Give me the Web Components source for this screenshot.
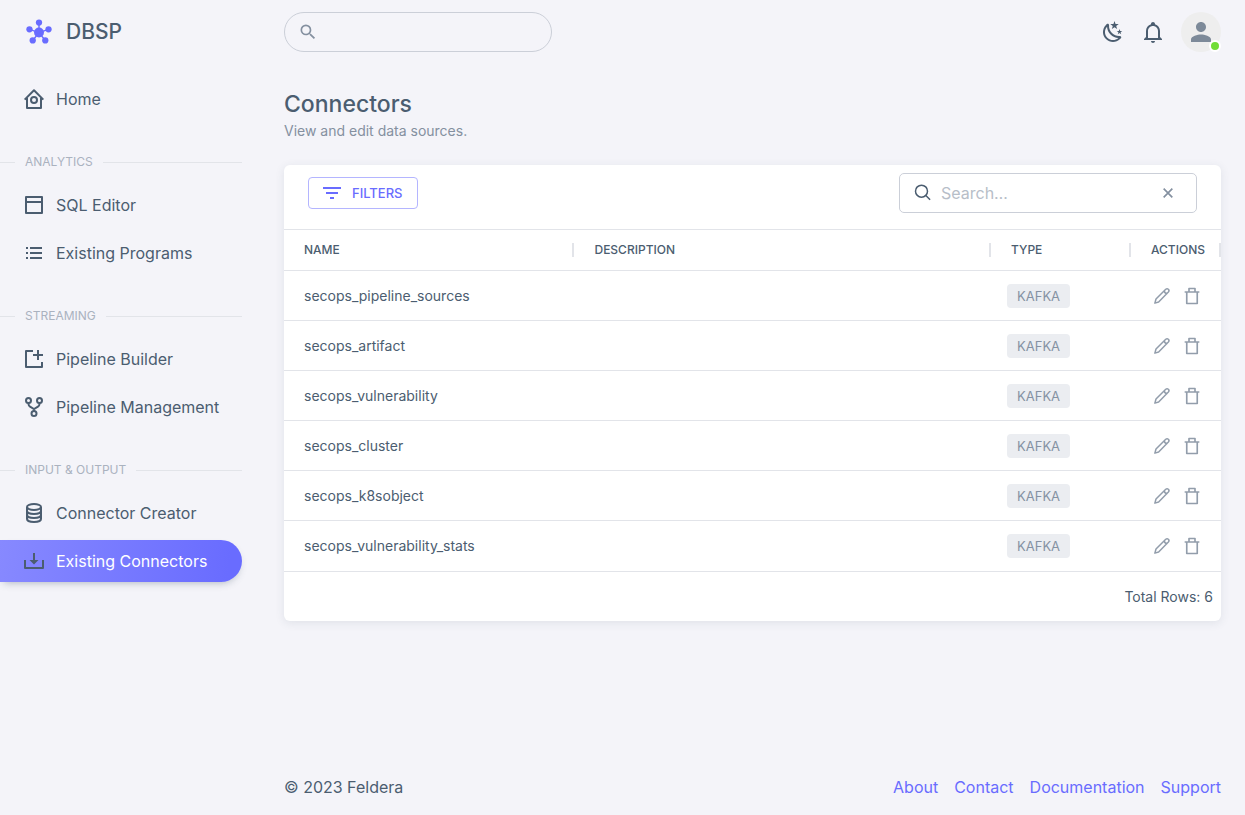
<!DOCTYPE html>
<html lang="en">
<head>
<meta charset="utf-8">
<meta name="viewport" content="width=device-width, initial-scale=1">
<title>DBSP - Connectors</title>
<style>
  html, body { margin: 0; }
  body {
    --primary: #696cff;
    --text: #4b5d70;
    --muted: #8490a0;
    --disabled: #aab2bf;
    --line: #e2e4e9;
    --line-strong: #cbcfd8;
    --page: #f4f4f9;
    background: var(--page);
    color: var(--text);
    font: 400 16px/24px Inter, "Liberation Sans", sans-serif;
  }
</style>
</head>
<body>
<app-shell>
  <side-nav slot="nav">
    <nav-item icon="home" href="#home">Home</nav-item>
    <nav-section>Analytics</nav-section>
    <nav-item icon="window" href="#sql">SQL Editor</nav-item>
    <nav-item icon="list" href="#programs">Existing Programs</nav-item>
    <nav-section>Streaming</nav-section>
    <nav-item icon="add" href="#builder">Pipeline Builder</nav-item>
    <nav-item icon="fork" href="#pipelines">Pipeline Management</nav-item>
    <nav-section>Input &amp; Output</nav-section>
    <nav-item icon="data" href="#creator">Connector Creator</nav-item>
    <nav-item icon="inbox" href="#connectors" active>Existing Connectors</nav-item>
  </side-nav>
  <top-bar slot="top"></top-bar>
  <page-heading heading="Connectors">View and edit data sources.</page-heading>
  <connector-grid></connector-grid>
  <page-footer slot="footer">© 2023 Feldera</page-footer>
</app-shell>
<script>
const ICONS = {
  logo: '<g fill="currentColor"><circle cx="12" cy="12.500" r="4.600"/><circle cx="12" cy="3.300" r="2.900"/><circle cx="3.200" cy="9.500" r="2.900"/><circle cx="20.800" cy="9.500" r="2.900"/><circle cx="6.200" cy="19.800" r="2.900"/><circle cx="17.800" cy="19.800" r="2.900"/></g><path stroke="currentColor" stroke-width="1.300" fill="none" d="M12 3v9M3.2 9.500 12 12.500l8.800-3M6.200 19.800 12 12.500l5.800 7.300"/>',
  home: '<g fill="none" stroke="currentColor" stroke-width="2" stroke-linejoin="round"><path d="M2.700 12.600 12 3.200l9.300 9.400M5 11v10h14V11"/><circle cx="12" cy="13" r="3"/></g>',
  window: '<path fill="none" stroke="currentColor" stroke-width="2" stroke-linejoin="round" d="M4 4h16v16H4zM4 9h16"/>',
  list: '<path fill="currentColor" d="M4 6h2v2H4zm0 5h2v2H4zm0 5h2v2H4zM8 6h12v2H8zm0 5h12v2H8zm0 5h12v2H8z"/>',
  add: '<path fill="none" stroke="currentColor" stroke-width="2" stroke-linejoin="round" d="M11 4H4v16h16v-5M16 3v10M11 8h10"/>',
  fork: '<g fill="none" stroke="currentColor" stroke-width="2"><circle cx="6.500" cy="5.500" r="2.500"/><circle cx="17.500" cy="5.500" r="2.500"/><circle cx="12" cy="18.500" r="2.500"/><path d="M6.500 8v1q0 2 2 3l3.500 2 3.500-2q2-1 2-3V8M12 13.500V16"/></g>',
  data: '<g fill="none" stroke="currentColor" stroke-width="2"><ellipse cx="12" cy="6" rx="7" ry="3"/><path d="M5 6v12c0 1.700 3.100 3 7 3s7-1.300 7-3V6M5 10c0 1.700 3.100 3 7 3s7-1.300 7-3M5 14c0 1.700 3.100 3 7 3s7-1.300 7-3"/></g>',
  inbox: '<path fill="none" stroke="currentColor" stroke-width="2" stroke-linejoin="round" d="M3 11v8h18v-8M12 4v8"/><path fill="currentColor" d="M7.500 11h9L12 15.500z"/>',
  magnify: '<path fill="currentColor" d="M9.500 3A6.500 6.500 0 0 1 16 9.500C16 11.110 15.410 12.590 14.440 13.730L14.710 14H15.500L20.500 19L19 20.500L14 15.500V14.710L13.730 14.440C12.590 15.410 11.110 16 9.500 16A6.500 6.500 0 0 1 3 9.500A6.500 6.500 0 0 1 9.500 3M9.500 5C7 5 5 7 5 9.500C5 12 7 14 9.500 14C12 14 14 12 14 9.500C14 7 12 5 9.500 5Z"/>',
  search: '<g fill="none" stroke="currentColor" stroke-width="2"><circle cx="10" cy="9.500" r="8"/><path d="m15.500 15 6 6"/></g>',
  night: '<path fill="currentColor" d="M17.75,4.09L15.22,6.03L16.13,9.09L13.5,7.28L10.87,9.09L11.78,6.03L9.25,4.09L12.44,4L13.5,1L14.56,4L17.75,4.09M21.25,11L19.61,12.25L20.2,14.23L18.5,13.06L16.8,14.23L17.39,12.25L15.75,11L17.81,10.95L18.5,9L19.19,10.95L21.25,11M18.97,15.95C19.8,15.87 20.69,17.05 20.16,17.8C19.84,18.25 19.5,18.67 19.08,19.07C15.17,23 8.84,23 4.94,19.07C1.03,15.17 1.03,8.83 4.94,4.93C5.34,4.53 5.76,4.17 6.21,3.85C6.96,3.32 8.14,4.21 8.06,5.04C7.79,7.9 8.75,10.87 10.95,13.06C13.14,15.26 16.1,16.22 18.97,15.95M17.33,17.97C14.5,17.81 11.7,16.64 9.53,14.5C7.36,12.31 6.2,9.5 6.04,6.68C3.23,9.82 3.34,14.64 6.35,17.66C9.37,20.67 14.19,20.78 17.33,17.97Z"/>',
  bell: '<path fill="currentColor" d="M10 21H14C14 22.1 13.1 23 12 23S10 22.1 10 21M21 19V20H3V19L5 17V11C5 7.9 7.03 5.17 10 4.29C10 4.19 10 4.1 10 4C10 2.9 10.9 2 12 2S14 2.9 14 4C14 4.1 14 4.19 14 4.29C16.97 5.17 19 7.9 19 11V17L21 19M17 11C17 8.24 14.76 6 12 6S7 8.24 7 11V18H17V11Z"/>',
  person: '<path fill="currentColor" d="M12 12c2.210 0 4-1.790 4-4s-1.790-4-4-4-4 1.790-4 4 1.790 4 4 4m0 2c-2.670 0-8 1.340-8 4v2h16v-2c0-2.660-5.330-4-8-4"/>',
  filter: '<path fill="currentColor" d="M10 18h4v-2h-4zM3 6v2h18V6zm3 7h12v-2H6z"/>',
  close: '<path fill="none" stroke="currentColor" stroke-width="2.500" d="m5.500 5.500 13 13M18.500 5.500l-13 13"/>',
  pencil: '<path fill="none" stroke="currentColor" stroke-width="2" stroke-linejoin="round" d="M2.500 21.500 4 16 17 3q1.800-1.500 3.500 0t0 3.700L7.500 20zM15 5.200q.500 3.500 4 3.700"/>',
  trash: '<path fill="none" stroke="currentColor" stroke-width="2.200" stroke-linejoin="round" d="M5 6.700V22h14V6.700M2.200 6.700h19.600M8 6.700V2h8v4.700"/>'
};
const icon = (name, size = 24) => `<svg width="${size}" height="${size}" viewBox="0 0 24 24" overflow="visible" aria-hidden="true">${ICONS[name]}</svg>`;

const BASE = `*, *::before, *::after { box-sizing: border-box; }
  svg { display: block; flex: none; }
  button, input { font: inherit; color: inherit; margin: 0; padding: 0; border: 0; background: none; outline: 0; }
  a { color: inherit; text-decoration: none; }`;

function define(name, css, html) {
  customElements.define(name, class extends HTMLElement {
    constructor() {
      super();
      const template = document.createElement('template');
      template.innerHTML = `<style>${BASE}${css}</style>${html(this)}`;
      this.attachShadow({ mode: 'open' }).append(template.content.cloneNode(true));
    }
  });
}

define('app-shell', `
  :host { display: grid; grid-template-columns: 260px minmax(0, 1fr); min-height: 100vh; }
  .page { display: flex; flex-direction: column; padding: 0 24px; }
  main { flex: 1; padding: 24px 0; }`,
  () => `<slot name="nav"></slot><div class="page"><slot name="top"></slot><main><slot></slot></main><slot name="footer"></slot></div>`);

define('side-nav', `
  :host { display: block; padding-right: 18px; }
  .brand { display: flex; align-items: center; gap: 14px; height: 64px; padding-left: 26px; font-size: 21px; font-weight: 500; margin-bottom: 14px; }
  .brand svg { color: var(--primary); }`,
  () => `<a class="brand" href="#home">${icon('logo', 26)}<span>DBSP</span></a><nav><slot></slot></nav>`);

define('nav-section', `
  :host { display: flex; align-items: center; gap: 10px; height: 20px; margin: 32px 0 12px; color: var(--disabled); font-size: 12px; line-height: 20px; text-transform: uppercase; }
  :host::before, :host::after { content: ""; height: 1px; background: var(--line); width: 15px; }
  :host::after { flex: 1; }`,
  () => `<span><slot></slot></span>`);

define('nav-item', `
  :host { display: block; }
  :host(:not(:last-child)) { margin-bottom: 6px; }
  a { display: flex; align-items: center; gap: 10px; height: 42px; padding-left: 22px; border-radius: 0 21px 21px 0; white-space: nowrap; }
  :host([active]) a { background: linear-gradient(98deg, #8789ff, #696cff 94%); box-shadow: 0 4px 8px -4px rgba(50, 71, 92, .42); }
  :host([active]) span { color: #fff; }`,
  el => `<a href="${el.getAttribute('href')}">${icon(el.getAttribute('icon'))}<span><slot></slot></span></a>`);

define('top-bar', `
  :host { display: flex; align-items: center; justify-content: space-between; height: 64px; }
  label { display: flex; align-items: center; gap: 8px; width: 268px; height: 40px; padding: 0 13px; border: 1px solid var(--line-strong); border-radius: 20px; color: var(--muted); }
  input { flex: 1; min-width: 0; }
  .tools { display: flex; align-items: center; gap: 16px; }
  .avatar { position: relative; display: grid; place-items: center; width: 40px; height: 40px; border-radius: 50%; background: #eee; color: #7d8a99; }
  .avatar i { position: absolute; right: 0; bottom: 0; width: 12px; height: 12px; border: 2px solid #fff; border-radius: 50%; background: #71dd37; }`,
  () => `<label>${icon('magnify', 20)}<input type="text" aria-label="Search"></label>
  <div class="tools"><button aria-label="Toggle dark mode">${icon('night')}</button><button aria-label="Notifications">${icon('bell')}</button>
  <button class="avatar" aria-label="Account">${icon('person', 30)}<i></i></button></div>`);

define('page-heading', `
  :host { display: block; margin-bottom: 24px; }
  h1 { margin: 0; font-size: 23px; line-height: 32px; font-weight: 500; }
  p { margin: 0; font-size: 14px; line-height: 21px; color: var(--muted); }`,
  el => `<h1>${el.getAttribute('heading')}</h1><p><slot></slot></p>`);

define('type-chip', `
  :host { display: inline-flex; align-items: center; height: 24px; padding: 0 10px; border-radius: 4px; background: #ebedf1; color: #8592a3; font-size: 13px; line-height: 24px; text-transform: uppercase; }`,
  () => `<slot></slot>`);

const ROWS = ['secops_pipeline_sources', 'secops_artifact', 'secops_vulnerability', 'secops_cluster', 'secops_k8sobject', 'secops_vulnerability_stats'];

define('connector-grid', `
  :host { display: block; overflow: hidden; border-radius: 6px; background: #fff; box-shadow: 0 2px 10px rgba(50, 71, 92, .1); font-size: 14px; line-height: 20px; }
  .bar { display: flex; justify-content: space-between; align-items: flex-start; height: 64px; padding: 8px 24px; }
  .filters { display: flex; align-items: center; gap: 8px; height: 32px; margin-top: 4px; padding: 0 15px 0 11px; border: 1px solid #b4b5ff; border-radius: 4px; color: var(--primary); font-size: 13px; font-weight: 500; }
  .search { display: flex; align-items: center; gap: 9px; width: 298px; height: 40px; padding: 0 20px 0 14px; border: 1px solid var(--line-strong); border-radius: 5px; font-size: 16px; }
  .search input { flex: 1; min-width: 0; }
  .search input::placeholder { color: #b7bec8; opacity: 1; }
  .search button { color: var(--muted); }
  table { width: 100%; table-layout: fixed; border-collapse: separate; border-spacing: 0; }
  th, td { padding: 0 20px; border-top: 1px solid var(--line); text-align: left; white-space: nowrap; }
  th { height: 41px; font-size: 12px; font-weight: 500; text-transform: uppercase; background: linear-gradient(var(--line), var(--line)) right center / 2px 14px no-repeat; }
  td { height: 50px; }
  tr:last-child td { height: 51px; }
  .name { width: 31%; } .type { width: 140px; } .actions { width: 90px; }
  td:nth-child(3) { padding: 0 16px; }
  td:nth-child(3) type-chip { vertical-align: middle; }
  .tools { display: flex; gap: 12px; color: #929dab; }
  td:last-child { padding: 0 0 0 22px; }
  footer { display: flex; align-items: center; justify-content: flex-end; height: 50px; padding: 0 8px; border-top: 1px solid var(--line); }`,
  () => `<div class="bar"><button class="filters">${icon('filter')}<span>FILTERS</span></button>
  <div class="search">${icon('search', 18)}<input type="text" placeholder="Search…" aria-label="Search connectors"><button aria-label="Clear">${icon('close', 16)}</button></div></div>
  <table><thead><tr><th class="name">Name</th><th>Description</th><th class="type">Type</th><th class="actions">Actions</th></tr></thead>
  <tbody>${ROWS.map(name => `<tr><td>${name}</td><td></td><td><type-chip>Kafka</type-chip></td><td><div class="tools"><button aria-label="Edit ${name}">${icon('pencil', 18)}</button><button aria-label="Delete ${name}">${icon('trash', 18)}</button></div></td></tr>`).join('')}</tbody></table>
  <footer>Total Rows: 6</footer>`);

define('page-footer', `
  :host { display: flex; align-items: center; justify-content: space-between; height: 56px; }
  nav { display: flex; gap: 16px; color: var(--primary); }`,
  () => `<span><slot></slot></span><nav><a href="#about">About</a><a href="#contact">Contact</a><a href="#docs">Documentation</a><a href="#support">Support</a></nav>`);
</script>
</body>
</html>
